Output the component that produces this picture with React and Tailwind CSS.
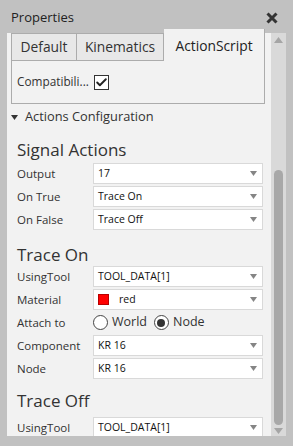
import { Check } from "lucide-react";

const font = { fontFamily: '"Open Sans", "Noto Sans", sans-serif' };

function Arrow() {
  return (
    <svg width="7" height="5" viewBox="0 0 7 5" className="shrink-0">
      <path d="M0 0 H7 L3.5 5 Z" fill="#858585" />
    </svg>
  );
}

function Select({ children, swatch }) {
  return (
    <div className="flex-1 h-[21px] bg-white border border-[#d9d9d9] flex items-center pl-[4px] pr-[5px]">
      {swatch && <span className="w-[11px] h-[11px] bg-[#ff0000] border border-[#b80000] mr-[10px]" />}
      <span className="flex-1 text-[10.5px] text-[#111] leading-none">{children}</span>
      <Arrow />
    </div>
  );
}

function Row({ label, children }) {
  return (
    <div className="flex items-center h-[23px]">
      <div className="w-[76px] text-[11.5px] text-[#333] leading-none">{label}</div>
      {children}
    </div>
  );
}

function Radio({ checked, label }) {
  return (
    <div className="flex items-center gap-[4px] mr-[7px]">
      <span className="w-[15px] h-[15px] rounded-full border border-[#444] bg-white flex items-center justify-center">
        {checked && <span className="w-[8px] h-[8px] rounded-full bg-[#333]" />}
      </span>
      <span className="text-[12.5px] text-[#333] leading-none">{label}</span>
    </div>
  );
}

function Heading({ children, className = "" }) {
  return (
    <div className={`pl-[10px] ${className}`}>
      <div className="text-[17px] leading-[20px] text-[#333]">{children}</div>
    </div>
  );
}

export default function App() {
  return (
    <div className="w-[293px] h-[446px] bg-[#c1c1c1] flex flex-col overflow-hidden" style={font}>
      <div className="h-[33px] shrink-0 flex items-center justify-between pl-[11px] pr-[15px] pt-[2px]">
        <span className="text-[13px] text-[#222]">Properties</span>
        <svg width="12" height="12" viewBox="0 0 12 12">
          <path d="M1.5 1.5 L10.5 10.5 M10.5 1.5 L1.5 10.5" stroke="#333" strokeWidth="3" />
        </svg>
      </div>
      <div className="flex ml-[7px] h-[403px] shrink-0">
        <div className="w-[264px] bg-[#f2f2f2]">
          <div className="pl-[4px] pr-[6px]">
            <div className="flex h-[28px]">
              <div className="w-[66px] bg-[#e8e8e8] border border-[#acacac] flex items-center justify-center text-[13.8px] text-[#333]">Default</div>
              <div className="w-[87px] bg-[#e8e8e8] border border-l-0 border-[#acacac] flex items-center justify-center text-[13.8px] text-[#333]">Kinematics</div>
              <div className="flex-1 -mt-[4px] h-[32px] bg-[#f2f2f2] border-r border-[#acacac] flex items-center justify-center pt-[3px] text-[13.8px] text-[#222]">ActionScript</div>
            </div>
            <div className="h-[43px] border border-t-0 border-[#acacac] flex items-center pl-[5px] gap-[5px]">
              <span className="text-[11.8px] text-[#333]">Compatibili...</span>
              <span className="w-[15px] h-[15px] bg-white border border-[#333] flex items-center justify-center">
                <Check size={13} strokeWidth={3.5} color="#222" />
              </span>
            </div>
          </div>
          <div className="h-[332px] overflow-hidden">
            <div className="flex items-center h-[26px] pl-[4px]">
              <svg width="7" height="5" viewBox="0 0 7 5" className="mr-[7px]">
                <path d="M0 0 H7 L3.5 5 Z" fill="#333" />
              </svg>
              <span className="text-[12.8px] text-[#333]">Actions Configuration</span>
            </div>
            <Heading className="h-[32px] pt-[10px]">Signal Actions</Heading>
            <div className="pl-[10px] pr-[8px]">
              <Row label="Output"><Select>17</Select></Row>
              <Row label="On True"><Select>Trace On</Select></Row>
              <Row label="On False"><Select>Trace Off</Select></Row>
            </div>
            <Heading className="h-[34px] pt-[14px]">Trace On</Heading>
            <div className="pl-[10px] pr-[8px]">
              <Row label="UsingTool"><Select>TOOL_DATA[1]</Select></Row>
              <Row label="Material"><Select swatch>red</Select></Row>
              <Row label="Attach to">
                <Radio label="World" />
                <Radio checked label="Node" />
              </Row>
              <Row label="Component"><Select>KR 16</Select></Row>
              <Row label="Node"><Select>KR 16</Select></Row>
            </div>
            <Heading className="h-[36px] pt-[11px]">Trace Off</Heading>
            <div className="pl-[10px] pr-[8px]">
              <Row label="UsingTool"><Select>TOOL_DATA[1]</Select></Row>
            </div>
          </div>
        </div>
        <div className="w-[15px] bg-[#d9d9d9] flex flex-col items-center pt-[4px] pb-[2px]">
          <svg width="9" height="6" viewBox="0 0 9 6">
            <path d="M0 6 H9 L4.5 0 Z" fill="#a5a5a5" />
          </svg>
          <div className="flex-1 w-full flex flex-col items-center pt-[127px] pb-[3px]">
            <div className="w-[9px] flex-1 rounded-full bg-[#a8a8a8]" />
          </div>
          <svg width="9" height="6" viewBox="0 0 9 6">
            <path d="M0 0 H9 L4.5 6 Z" fill="#a5a5a5" />
          </svg>
        </div>
        <div className="w-[7px]" />
      </div>
    </div>
  );
}
